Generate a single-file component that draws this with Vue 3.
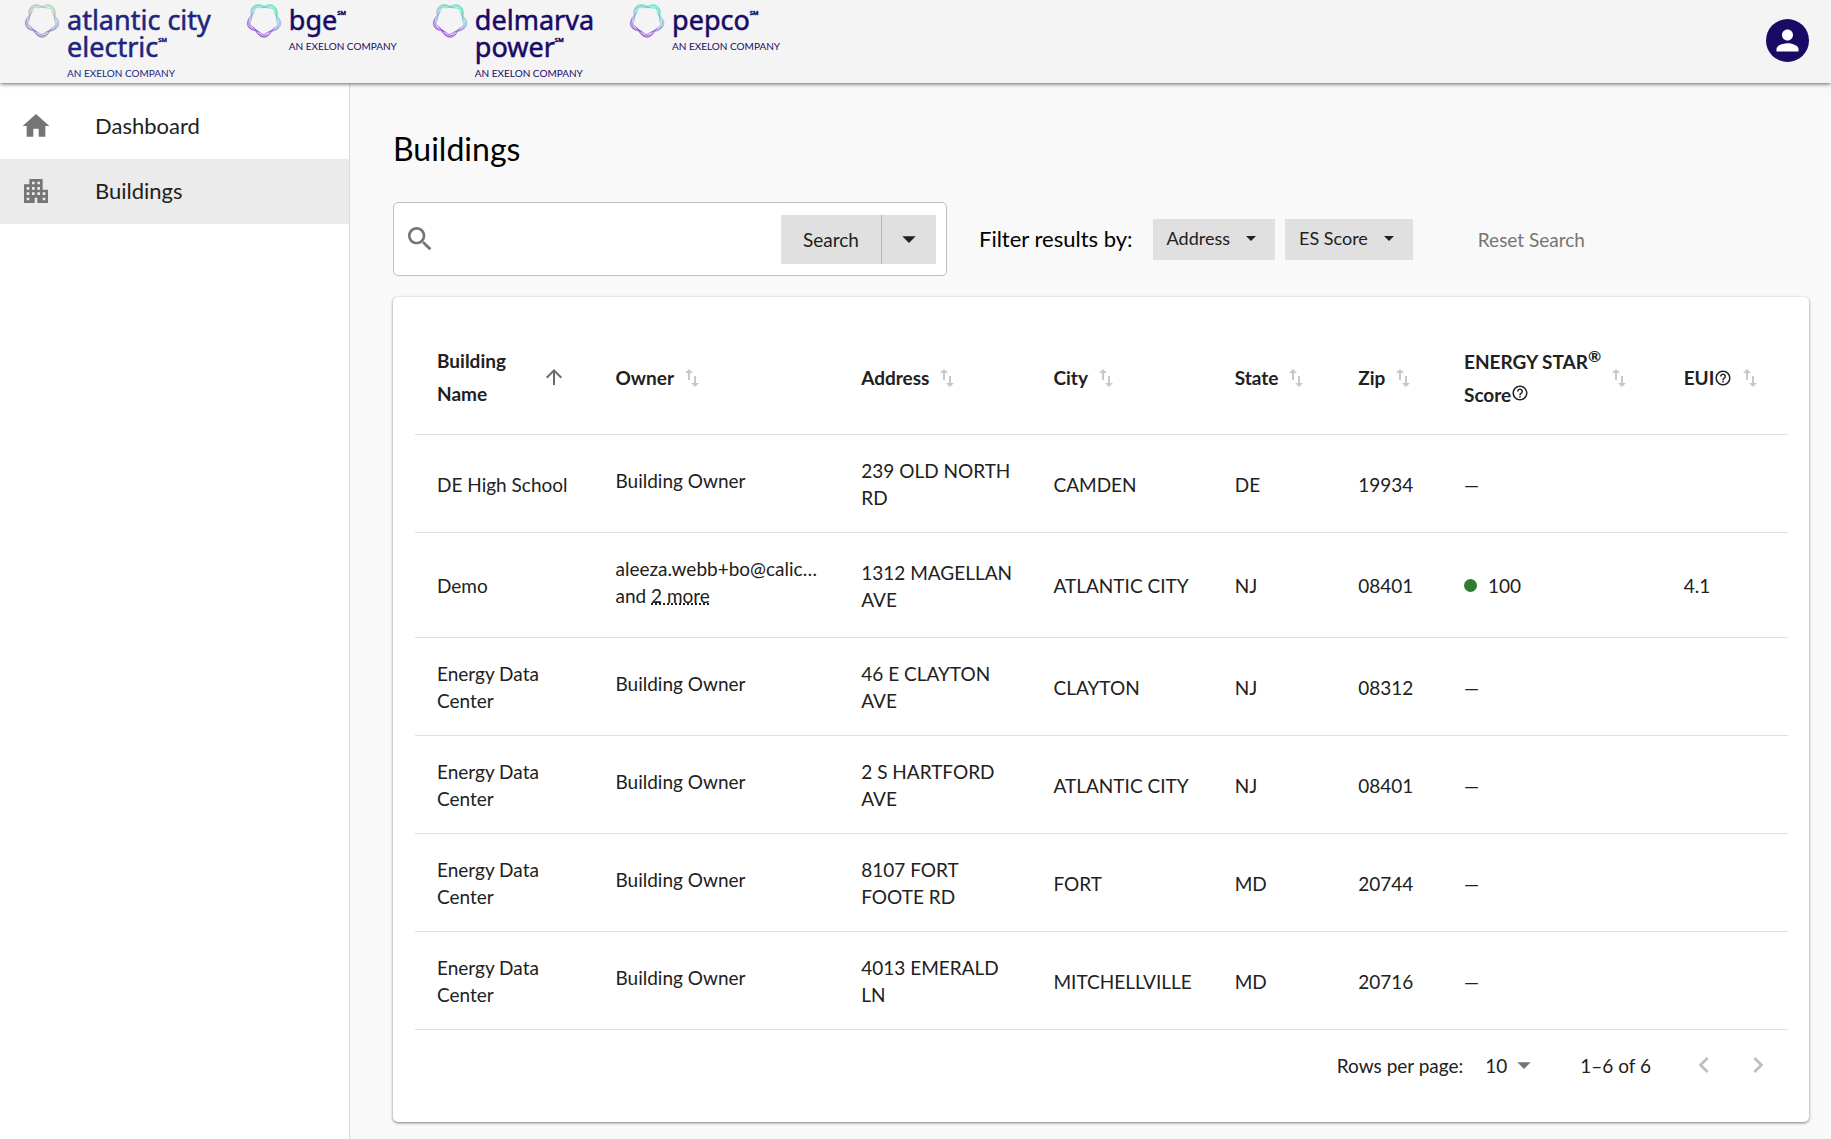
<template>
  <div class="app">
    <header class="topbar">
      <div class="logos">
        <div v-for="logo in logos" :key="logo.id" class="logo">
          <svg class="logo-ring" viewBox="0 0 36 36" aria-hidden="true">
            <defs>
              <linearGradient :id="logo.id" gradientUnits="userSpaceOnUse" x1="24" y1="1" x2="12" y2="35">
                <stop offset="0.1" :stop-color="logo.colors[0]" />
                <stop offset="0.5" :stop-color="logo.colors[1]" />
                <stop offset="0.85" :stop-color="logo.colors[2]" />
              </linearGradient>
            </defs>
            <path v-for="(d, i) in rings" :key="i" :d="d" :stroke="`url(#${logo.id})`" />
          </svg>
          <div class="logo-text" :style="{ color: logo.ink }">
            <div v-for="(line, i) in logo.lines" :key="line" class="logo-name">
              {{ line }}<span v-if="i === logo.lines.length - 1" class="logo-mark">SM</span>
            </div>
            <div class="logo-tag">AN EXELON COMPANY</div>
          </div>
        </div>
      </div>
      <button class="avatar" type="button" aria-label="Account">
        <svg viewBox="0 0 24 24"><path :d="icons.person" /></svg>
      </button>
    </header>

    <div class="body">
      <nav class="sidebar">
        <a
          v-for="item in navItems"
          :key="item.label"
          href="#"
          class="nav-item"
          :class="{ active: item.active }"
        >
          <svg viewBox="0 0 24 24"><path :d="item.icon" /></svg>
          <span>{{ item.label }}</span>
        </a>
      </nav>

      <main class="content">
        <h1>Buildings</h1>

        <div class="toolbar">
          <form class="search-box" @submit.prevent>
            <svg class="search-icon" viewBox="0 0 24 24"><path :d="icons.search" /></svg>
            <input v-model="query" type="text" aria-label="Search buildings" />
            <button class="search-btn" type="submit">Search</button>
            <button class="search-more" type="button" aria-label="Search options">
              <svg viewBox="0 0 24 24"><path :d="icons.caret" /></svg>
            </button>
          </form>
          <span class="filter-label">Filter results by:</span>
          <div class="filters">
            <button v-for="f in filters" :key="f" class="filter-btn" type="button">
              {{ f }}
              <svg viewBox="0 0 24 24"><path :d="icons.caret" /></svg>
            </button>
          </div>
          <button class="reset-btn" type="button" @click="query = ''">Reset Search</button>
        </div>

        <section class="card">
          <table>
            <colgroup>
              <col v-for="col in columns" :key="col.key" :style="{ width: col.width + '%' }" />
            </colgroup>
            <thead>
              <tr>
                <th v-for="col in columns" :key="col.key" scope="col">
                  <div class="th-inner" :class="{ sorted: col.sorted }">
                    <span v-if="col.key === 'score'">
                      ENERGY STAR<sup>®</sup><br />Score<svg class="help raised" viewBox="0 0 24 24"><path :d="icons.help" /></svg>
                    </span>
                    <span v-else-if="col.key === 'eui'">EUI<svg class="help" viewBox="0 0 24 24"><path :d="icons.help" /></svg></span>
                    <span v-else>{{ col.label }}</span>
                    <svg v-if="col.sorted" class="arrow-up" viewBox="0 0 24 24"><path :d="icons.up" /></svg>
                    <svg v-else class="sort" viewBox="0 0 14 18"><path :d="icons.sort" /></svg>
                  </div>
                </th>
              </tr>
            </thead>
            <tbody>
              <tr v-for="(row, i) in rows" :key="i">
                <td>{{ row.name }}</td>
                <td>
                  <div class="owner">
                    <div class="owner-name">{{ row.owner }}</div>
                    <div v-if="row.more">and <span class="more">{{ row.more }} more</span></div>
                  </div>
                </td>
                <td class="address">{{ row.address }}</td>
                <td>{{ row.city }}</td>
                <td>{{ row.state }}</td>
                <td>{{ row.zip }}</td>
                <td>
                  <span v-if="row.score" class="score"><i class="dot"></i>{{ row.score }}</span>
                  <template v-else>—</template>
                </td>
                <td>{{ row.eui }}</td>
              </tr>
            </tbody>
          </table>

          <div class="pagination">
            <label for="rows-per-page">Rows per page:</label>
            <div class="select-wrap">
              <select id="rows-per-page" v-model="perPage">
                <option :value="10">10</option>
                <option :value="25">25</option>
                <option :value="50">50</option>
              </select>
              <svg viewBox="0 0 24 24"><path :d="icons.caret" /></svg>
            </div>
            <span class="range">1–{{ rows.length }} of {{ rows.length }}</span>
            <button type="button" class="page-btn" aria-label="Previous page" disabled>
              <svg viewBox="0 0 24 24"><path :d="icons.prev" /></svg>
            </button>
            <button type="button" class="page-btn" aria-label="Next page" disabled>
              <svg viewBox="0 0 24 24"><path :d="icons.next" /></svg>
            </button>
          </div>
        </section>
      </main>
    </div>
  </div>
</template>

<script setup>
import { ref } from 'vue';

const query = ref('');
const perPage = ref(10);

const icons = {
  home: 'M10 20v-6h4v6h5v-8h3L12 3 2 12h3v8z',
  apartment: 'M17 11V3H7v4H3v14h8v-4h2v4h8V11h-4zM7 19H5v-2h2v2zm0-4H5v-2h2v2zm0-4H5V9h2v2zm4 4H9v-2h2v2zm0-4H9V9h2v2zm0-4H9V5h2v2zm4 8h-2v-2h2v2zm0-4h-2V9h2v2zm0-4h-2V5h2v2zm4 12h-2v-2h2v2zm0-4h-2v-2h2v2z',
  person: 'M12 12c2.21 0 4-1.79 4-4s-1.79-4-4-4-4 1.79-4 4 1.79 4 4 4zm0 2c-2.67 0-8 1.34-8 4v2h16v-2c0-2.66-5.33-4-8-4z',
  search: 'M15.5 14h-.79l-.28-.27C15.41 12.59 16 11.11 16 9.5 16 5.91 13.09 3 9.5 3S3 5.91 3 9.5 5.91 16 9.5 16c1.61 0 3.09-.59 4.23-1.57l.27.28v.79l5 4.99L20.49 19l-4.99-5zm-6 0C7.01 14 5 11.99 5 9.5S7.01 5 9.5 5 14 7.01 14 9.5 11.99 14 9.5 14z',
  caret: 'M7 10l5 5 5-5z',
  up: 'M4 12l1.41 1.41L11 7.83V20h2V7.83l5.58 5.59L20 12l-8-8-8 8z',
  sort: 'M4 0L8 4H5V11H3V4H0zM9 7H11V14H14L10 18L6 14H9z',
  help: 'M11 18h2v-2h-2v2zm1-16C6.48 2 2 6.48 2 12s4.48 10 10 10 10-4.48 10-10S17.52 2 12 2zm0 18c-4.41 0-8-3.59-8-8s3.59-8 8-8 8 3.59 8 8-3.59 8-8 8zm0-14c-2.21 0-4 1.79-4 4h2c0-1.1.9-2 2-2s2 .9 2 2c0 2-3 1.75-3 5h2c0-2.25 3-2.5 3-5 0-2.21-1.79-4-4-4z',
  prev: 'M15.41 7.41L14 6l-6 6 6 6 1.41-1.41L10.83 12z',
  next: 'M10 6L8.59 7.41 13.17 12l-4.58 4.59L10 18l6-6z'
};

const bright = ['#1fdcae', '#6f9bd0', '#7a1fd0'];
const logos = [
  { id: 'ace', lines: ['atlantic city', 'electric'], ink: '#20247c', colors: ['#8fcf9f', '#8590b8', '#7a5bb0'] },
  { id: 'bge', lines: ['bge'], ink: '#190a66', colors: bright },
  { id: 'dpl', lines: ['delmarva', 'power'], ink: '#190a66', colors: bright },
  { id: 'pepco', lines: ['pepco'], ink: '#190a66', colors: bright }
];

// Five-lobed strands woven around a clear inner circle, each turned a little further
const rings = [1.7, 2.3, 2.3, 2, 1.5].map((amp, k) => {
  const phase = ((6 + k * 7) * Math.PI) / 180;
  const points = [];
  for (let i = 0; i < 120; i++) {
    const t = (i / 120) * Math.PI * 2;
    const r = 12.6 + amp + amp * Math.cos(5 * (t - phase));
    points.push(`${(18 + r * Math.cos(t)).toFixed(2)} ${(18 + r * Math.sin(t)).toFixed(2)}`);
  }
  return `M${points.join('L')}Z`;
});

const navItems = [
  { label: 'Dashboard', icon: icons.home },
  { label: 'Buildings', icon: icons.apartment, active: true }
];

const filters = ['Address', 'ES Score'];

const columns = [
  { key: 'name', label: 'Building Name', width: 13, sorted: true },
  { key: 'owner', label: 'Owner', width: 17.9 },
  { key: 'address', label: 'Address', width: 14 },
  { key: 'city', label: 'City', width: 13.2 },
  { key: 'state', label: 'State', width: 9 },
  { key: 'zip', label: 'Zip', width: 7.7 },
  { key: 'score', label: 'ENERGY STAR Score', width: 16 },
  { key: 'eui', label: 'EUI', width: 9.2 }
];

const rows = [
  { name: 'DE High School', owner: 'Building Owner', address: '239 OLD NORTH RD', city: 'CAMDEN', state: 'DE', zip: '19934' },
  { name: 'Demo', owner: 'aleeza.webb+bo@calic…', more: 2, address: '1312 MAGELLAN AVE', city: 'ATLANTIC CITY', state: 'NJ', zip: '08401', score: 100, eui: '4.1' },
  { name: 'Energy Data Center', owner: 'Building Owner', address: '46 E CLAYTON AVE', city: 'CLAYTON', state: 'NJ', zip: '08312' },
  { name: 'Energy Data Center', owner: 'Building Owner', address: '2 S HARTFORD AVE', city: 'ATLANTIC CITY', state: 'NJ', zip: '08401' },
  { name: 'Energy Data Center', owner: 'Building Owner', address: '8107 FORT FOOTE RD', city: 'FORT', state: 'MD', zip: '20744' },
  { name: 'Energy Data Center', owner: 'Building Owner', address: '4013 EMERALD LN', city: 'MITCHELLVILLE', state: 'MD', zip: '20716' }
];
</script>

<style>
body {
  margin: 0;
  background: #f9f9f9;
}
</style>

<style scoped>
.app {
  display: flex;
  flex-direction: column;
  min-height: 100vh;
  font-family: Lato, "Liberation Sans", sans-serif;
  font-size: 19px;
  color: #212121;
}

.app * {
  box-sizing: border-box;
}

svg {
  display: block;
  flex: none;
  fill: currentColor;
}

button {
  font: inherit;
  color: inherit;
  border: 0;
  padding: 0;
  background: none;
  cursor: pointer;
}

.topbar {
  position: relative;
  display: flex;
  justify-content: space-between;
  align-items: flex-start;
  height: 83px;
  padding: 0 22px 0 24px;
  background: #f4f4f4;
  box-shadow: 0 1px 4px rgba(0, 0, 0, 0.6);
}

.logos {
  display: flex;
  gap: 35px;
}

.logo {
  display: flex;
  gap: 7px;
}

.logo-ring {
  width: 36px;
  height: 36px;
  margin-top: 2px;
  fill: none;
  stroke-width: 0.5;
}

.logo-text {
  padding-top: 6px;
}

.logo-name {
  height: 27px;
  font-family: "Noto Sans", sans-serif;
  font-size: 27px;
  line-height: 27px;
  white-space: nowrap;
  -webkit-text-stroke: 0.5px currentColor;
}

.logo-mark {
  font-size: 6px;
  line-height: 1;
  vertical-align: 15px;
}

.logo-tag {
  margin-top: 6px;
  font-size: 10px;
  line-height: 14px;
  white-space: nowrap;
}

.avatar {
  display: flex;
  align-items: center;
  justify-content: center;
  width: 43px;
  height: 43px;
  margin-top: 19px;
  border-radius: 50%;
  background: #190a66;
  color: #fff;
}

.avatar svg {
  width: 33px;
  height: 33px;
}

.body {
  display: flex;
  flex: 1;
}

.sidebar {
  flex: none;
  width: 350px;
  padding-top: 11px;
  background: #fff;
  border-right: 1px solid #dcdcdc;
}

.nav-item {
  display: flex;
  align-items: center;
  gap: 43px;
  height: 65px;
  padding: 0 20px 2px;
  font-size: 22px;
  color: #212121;
  text-decoration: none;
}

.nav-item.active {
  background: #ebebeb;
}

.nav-item svg {
  width: 32px;
  height: 32px;
  color: #757575;
}

.content {
  flex: 1;
  min-width: 0;
  padding: 46px 22px 16px 43px;
}

h1 {
  margin: 0 0 33px;
  font-size: 32px;
  font-weight: 400;
  line-height: 40px;
  color: #000;
}

.toolbar {
  display: flex;
  align-items: center;
  margin-bottom: 21px;
}

.search-box {
  display: flex;
  align-items: center;
  width: 554px;
  height: 74px;
  padding: 0 10px;
  border: 1px solid #c0c0c0;
  border-radius: 5px;
  background: #fff;
}

.search-icon {
  width: 32px;
  height: 32px;
  color: #757575;
}

.search-box input {
  flex: 1;
  min-width: 0;
  height: 48px;
  margin: 0 8px;
  border: 0;
  outline: 0;
  font: inherit;
}

.search-btn,
.search-more {
  display: flex;
  align-items: center;
  justify-content: center;
  width: 100px;
  height: 49px;
  background: #e0e0e0;
}

.search-more {
  width: 55px;
  border-left: 1px solid #b8b8b8;
}

.search-more svg {
  width: 32px;
  height: 32px;
}

.filter-label {
  margin: 0 20px 0 32px;
  padding-bottom: 2px;
  font-size: 22px;
  color: #000;
  white-space: nowrap;
}

.filters {
  display: flex;
  gap: 10px;
}

.filter-btn {
  display: flex;
  align-items: center;
  gap: 9px;
  height: 41px;
  padding: 0 12px 2px 14px;
  font-size: 18px;
  background: #e0e0e0;
  white-space: nowrap;
}

.filter-btn svg {
  width: 24px;
  height: 24px;
}

.reset-btn {
  margin-left: 65px;
  color: #757575;
  white-space: nowrap;
}

.card {
  padding: 22px 21px 22px 22px;
  border-radius: 5px;
  background: #fff;
  box-shadow: 0 1px 3px rgba(0, 0, 0, 0.5);
}

table {
  width: 100%;
  table-layout: fixed;
  border-collapse: separate;
  border-spacing: 0;
  line-height: 27px;
}

th,
td {
  padding: 22px 22px 21px;
  border-bottom: 1px solid #e0e0e0;
  text-align: left;
  font-weight: 400;
}

th {
  height: 116px;
  padding: 2px 22px 0;
  font-weight: 700;
  line-height: 33px;
}

.th-inner {
  display: flex;
  align-items: center;
  gap: 11px;
}

.th-inner.sorted {
  justify-content: space-between;
  padding: 0 5px 2px 0;
}

.th-inner span {
  min-width: 0;
}

sup {
  font-size: 16px;
  line-height: 0;
}

.help {
  display: inline-block;
  width: 18px;
  height: 18px;
  vertical-align: -2px;
}

.help.raised {
  vertical-align: 0;
}

.arrow-up {
  width: 24px;
  height: 24px;
  color: #6b6b6b;
}

.sort {
  width: 14px;
  height: 18px;
  color: #c8c8c8;
}

.address {
  padding-right: 16px;
}

.owner {
  margin-bottom: 7px;
}

.owner-name {
  white-space: nowrap;
}

.more {
  text-decoration: underline dotted;
}

.score {
  display: flex;
  align-items: center;
  gap: 11px;
}

.dot {
  width: 13px;
  height: 13px;
  border-radius: 50%;
  background: #2e7d32;
}

.pagination {
  display: flex;
  align-items: center;
  justify-content: flex-end;
  height: 70px;
  padding-right: 14px;
}

.select-wrap {
  position: relative;
  display: flex;
  align-items: center;
  margin: 0 40px 0 12px;
}

.select-wrap select {
  width: 65px;
  height: 32px;
  padding: 0 0 0 10px;
  border: 0;
  appearance: none;
  background: none;
  font: inherit;
  color: inherit;
}

.select-wrap svg {
  position: absolute;
  right: 0;
  width: 32px;
  height: 32px;
  color: #757575;
  pointer-events: none;
}

.range {
  margin-right: 37px;
}

.page-btn {
  color: #bdbdbd;
}

.page-btn + .page-btn {
  margin-left: 22px;
}

.page-btn svg {
  width: 32px;
  height: 32px;
}
</style>
